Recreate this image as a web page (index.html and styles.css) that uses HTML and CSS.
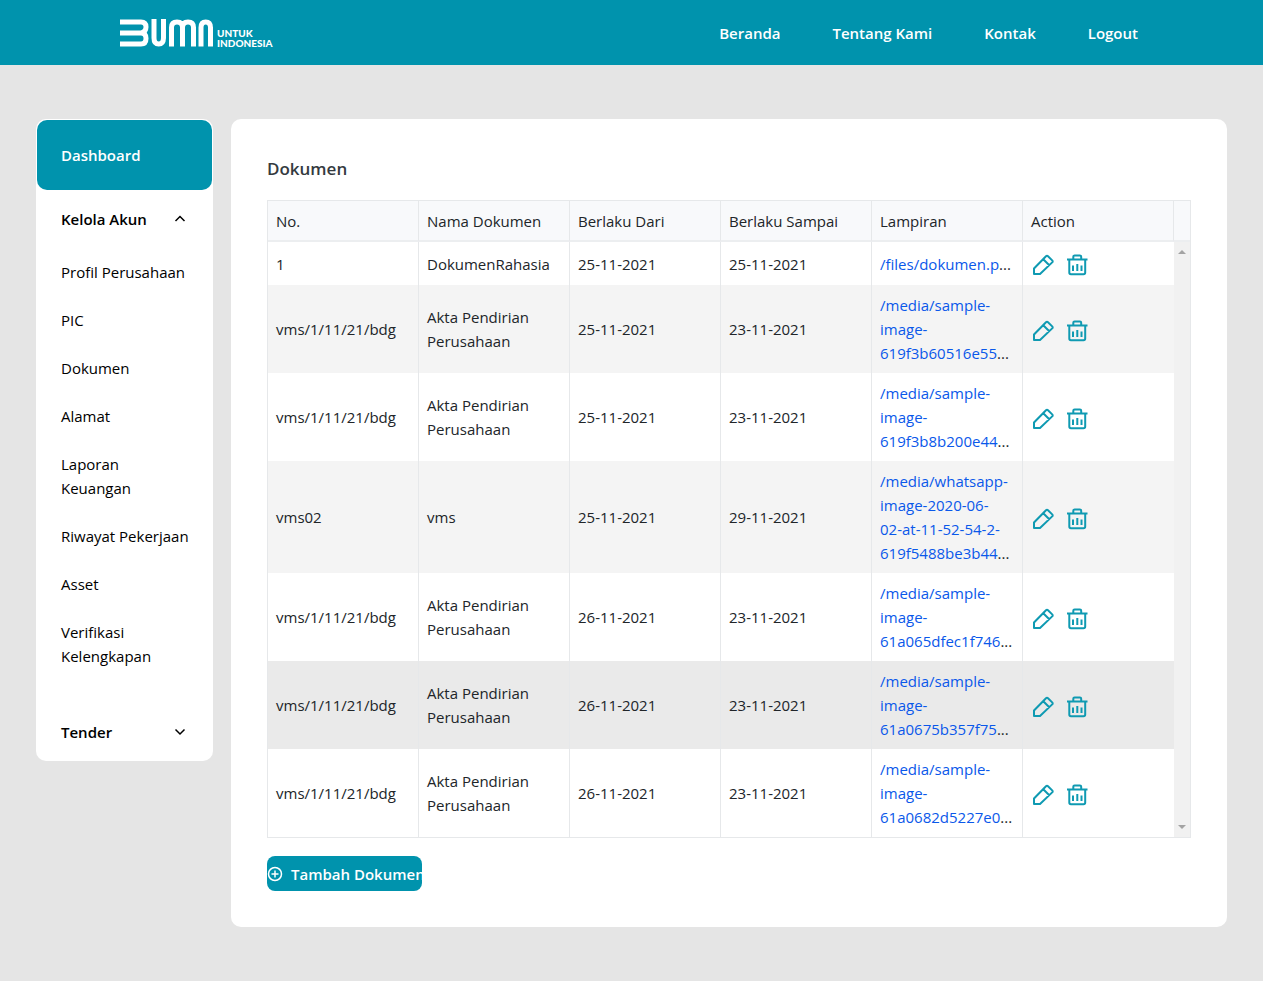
FILE: index.html
```html
<!DOCTYPE html>
<html lang="id">
<head>
<meta charset="utf-8">
<meta name="viewport" content="width=device-width, initial-scale=1">
<title>Dokumen</title>
<link rel="stylesheet" href="styles.css">
</head>
<body>
<svg class="sprite" aria-hidden="true">
  <symbol id="pencil" viewBox="0 0 24 24">
    <path d="M3 21v-5.500L15 3.200q1-1 2 0l4.200 4.200q1 1 0 2L9 21zM12 6l6.300 6.300"/>
  </symbol>
  <symbol id="trash" viewBox="0 0 24 24">
    <path d="M2 6.500h20.500M4.300 6.500V19.500q0 1.700 1.700 1.700h12.500q1.700 0 1.700-1.700V6.500M8.300 6V3.800q0-1.300 1.300-1.300h5.300q1.300 0 1.300 1.300V6M8 12.500v5.500M12.300 11v7M16.500 12.500v5.500"/>
  </symbol>
</svg>
<header class="topbar">
  <a class="brand" href="#" aria-label="BUMN Untuk Indonesia">
    <svg class="brand-mark" viewBox="0 0 93 30" aria-hidden="true">
      <path d="M0 4H21Q26 4 26 9T21 15H0M21 15Q26 15 26 20.500T21 26H0"/>
      <path d="M34 1V20Q34 26 38.700 26T43.500 20V1M51.500 28.500V9.500Q51.500 4 57 4T62.500 9.500V28.500M62.500 9.500Q62.500 4 68 4T73.500 9.500V28.500M81 28.500V9.500Q81 4 85.700 4T90.500 9.500V28.500"/>
    </svg>
    <span class="brand-text">UNTUK<br>INDONESIA</span>
  </a>
  <nav class="topnav">
    <a href="#">Beranda</a><a href="#">Tentang Kami</a><a href="#">Kontak</a><a href="#">Logout</a>
  </nav>
</header>
<div class="page">
  <aside class="sidebar">
    <a class="side-dashboard" href="#">Dashboard</a>
    <button class="side-group" type="button" aria-expanded="true">Kelola Akun
      <svg class="chevron" viewBox="0 0 12 12"><path d="M1.500 8L6 3.500l4.500 4.500"/></svg></button>
    <nav class="side-items">
      <a href="#">Profil Perusahaan</a>
      <a href="#">PIC</a>
      <a href="#">Dokumen</a>
      <a href="#">Alamat</a>
      <a href="#">Laporan<br>Keuangan</a>
      <a href="#">Riwayat Pekerjaan</a>
      <a href="#">Asset</a>
      <a href="#">Verifikasi<br>Kelengkapan</a>
    </nav>
    <button class="side-group" type="button" aria-expanded="false">Tender
      <svg class="chevron" viewBox="0 0 12 12"><path d="M1.500 3.500L6 8l4.500-4.500"/></svg></button>
  </aside>
  <main class="card">
    <h1>Dokumen</h1>
    <div class="grid">
      <div class="table-area">
      <table>
        <thead><tr><th>No.</th><th>Nama Dokumen</th><th>Berlaku Dari</th><th>Berlaku Sampai</th><th>Lampiran</th><th>Action</th></tr></thead>
        <tbody>
          <tr><td>1</td><td>DokumenRahasia</td><td>25-11-2021</td><td>25-11-2021</td><td class="file"><a href="#">/files/dokumen.p</a>...</td><td><div class="actions"><button type="button" aria-label="Edit"><svg><use href="#pencil"/></svg></button><button type="button" aria-label="Hapus"><svg><use href="#trash"/></svg></button></div></td></tr>
          <tr><td>vms/1/11/21/bdg</td><td>Akta Pendirian Perusahaan</td><td>25-11-2021</td><td>23-11-2021</td><td class="file"><a href="#">/media/sample-<br>image-<br>619f3b60516e55</a>...</td><td><div class="actions"><button type="button" aria-label="Edit"><svg><use href="#pencil"/></svg></button><button type="button" aria-label="Hapus"><svg><use href="#trash"/></svg></button></div></td></tr>
          <tr><td>vms/1/11/21/bdg</td><td>Akta Pendirian Perusahaan</td><td>25-11-2021</td><td>23-11-2021</td><td class="file"><a href="#">/media/sample-<br>image-<br>619f3b8b200e44</a>...</td><td><div class="actions"><button type="button" aria-label="Edit"><svg><use href="#pencil"/></svg></button><button type="button" aria-label="Hapus"><svg><use href="#trash"/></svg></button></div></td></tr>
          <tr><td>vms02</td><td>vms</td><td>25-11-2021</td><td>29-11-2021</td><td class="file"><a href="#">/media/whatsapp-<br>image-2020-06-<br>02-at-11-52-54-2-<br>619f5488be3b44</a>...</td><td><div class="actions"><button type="button" aria-label="Edit"><svg><use href="#pencil"/></svg></button><button type="button" aria-label="Hapus"><svg><use href="#trash"/></svg></button></div></td></tr>
          <tr><td>vms/1/11/21/bdg</td><td>Akta Pendirian Perusahaan</td><td>26-11-2021</td><td>23-11-2021</td><td class="file"><a href="#">/media/sample-<br>image-<br>61a065dfec1f746</a>...</td><td><div class="actions"><button type="button" aria-label="Edit"><svg><use href="#pencil"/></svg></button><button type="button" aria-label="Hapus"><svg><use href="#trash"/></svg></button></div></td></tr>
          <tr class="hovered"><td>vms/1/11/21/bdg</td><td>Akta Pendirian Perusahaan</td><td>26-11-2021</td><td>23-11-2021</td><td class="file"><a href="#">/media/sample-<br>image-<br>61a0675b357f75</a>...</td><td><div class="actions"><button type="button" aria-label="Edit"><svg><use href="#pencil"/></svg></button><button type="button" aria-label="Hapus"><svg><use href="#trash"/></svg></button></div></td></tr>
          <tr><td>vms/1/11/21/bdg</td><td>Akta Pendirian Perusahaan</td><td>26-11-2021</td><td>23-11-2021</td><td class="file"><a href="#">/media/sample-<br>image-<br>61a0682d5227e0</a>...</td><td><div class="actions"><button type="button" aria-label="Edit"><svg><use href="#pencil"/></svg></button><button type="button" aria-label="Hapus"><svg><use href="#trash"/></svg></button></div></td></tr>
        </tbody>
      </table>
      </div>
      <div class="gutter" aria-hidden="true">
        <div class="gutter-head"></div>
        <div class="scrollbar">
          <svg class="arrow" viewBox="0 0 8 4"><path d="M0 4L4 0l4 4z"/></svg>
          <svg class="arrow" viewBox="0 0 8 4"><path d="M0 0h8L4 4z"/></svg>
        </div>
      </div>
    </div>
    <button class="add" type="button"><svg viewBox="0 0 16 16"><circle cx="8" cy="8" r="6.500"/><path d="M8 4.500v7M4.500 8h7"/></svg><span>Tambah Dokumen</span></button>
  </main>
</div>
</body>
</html>
```

FILE: styles.css
```css
* { box-sizing: border-box; }

body {
  margin: 0;
  min-height: 100vh;
  background: #e5e5e5;
  color: #212529;
  font: 15px/24px "Open Sans", "Noto Sans", sans-serif;
}

a { color: inherit; text-decoration: none; }
button { font: inherit; color: inherit; border: 0; padding: 0; background: none; cursor: pointer; }
.sprite { display: none; }

.topbar {
  display: flex;
  align-items: center;
  justify-content: space-between;
  height: 65px;
  padding: 0 125px 0 120px;
  background: #0093ad;
  color: #fff;
}
.brand { display: flex; align-items: flex-end; gap: 4px; }
.brand-mark { width: 93px; height: 30px; fill: none; stroke: #fff; stroke-width: 5; }
.brand-text { font: 900 10px/10px Lato, sans-serif; }
.topnav { display: flex; gap: 52px; font-weight: 600; }

.page {
  display: flex;
  align-items: flex-start;
  gap: 18px;
  padding: 54px 36px;
}

.sidebar {
  flex: 0 0 177px;
  padding: 1px;
  background: #fff;
  border-radius: 10px;
  color: #000;
}
.side-dashboard {
  display: block;
  padding: 24px 24px 23px;
  line-height: 23px;
  border-radius: 10px;
  background: #0093ad;
  color: #fff;
  font-weight: 600;
}
.side-group {
  display: flex;
  align-items: center;
  justify-content: space-between;
  width: 100%;
  height: 58px;
  padding: 0 26px 0 24px;
  font-weight: 600;
}
.chevron { width: 12px; height: 12px; fill: none; stroke: #000; stroke-width: 1.5; }
.side-items { padding-bottom: 34px; }
.side-group + .side-items + .side-group { height: 57px; }
.side-items a { display: block; padding: 12px 12px 12px 24px; white-space: nowrap; }
.side-items { padding-bottom: 35px; margin-bottom: -12px; }

.card {
  flex: 1;
  min-width: 0;
  padding: 36px;
  background: #fff;
  border-radius: 10px;
}
h1 { margin: 0 0 18px; font-size: 17px; line-height: 27px; font-weight: 600; color: #343a40; }

.grid { display: flex; border: 1px solid #e6e8ea; }
.table-area { flex: 1; min-width: 0; }
table { width: 100%; table-layout: fixed; border-collapse: separate; border-spacing: 0; }
th, td { padding: 8px; border-right: 1px solid #e6e8ea; text-align: left; vertical-align: middle; }
th { height: 41px; padding: 0 8px; border-bottom: 2px solid #eceef0; background: #f8f9fb; font-weight: 400; white-space: nowrap; }
td:last-child { border-right: 0; }
tbody tr:nth-child(2), tbody tr:nth-child(4) { background: #f4f4f4; }
tbody tr.hovered { background: #eaeaea; }
.file { white-space: nowrap; }
.file a { color: #0a58ea; }
.actions { display: flex; align-items: flex-end; gap: 10px; height: 27px; }
.actions button { width: 24px; height: 24px; }
.actions svg { display: block; width: 24px; height: 24px; fill: none; stroke: #0f9ab2; stroke-width: 2; stroke-linejoin: round; }

.gutter { display: flex; flex-direction: column; width: 16px; }
.gutter-head { height: 41px; border-bottom: 2px solid #eceef0; background: #f8f9fb; }
.scrollbar {
  flex: 1;
  display: flex;
  flex-direction: column;
  align-items: center;
  justify-content: space-between;
  padding: 8px 0;
  background: #f1f1f1;
}
.arrow { width: 8px; height: 4px; fill: #a3a3a3; }

.add {
  display: flex;
  align-items: center;
  gap: 8px;
  width: 155px;
  height: 35px;
  margin-top: 18px;
  overflow: hidden;
  border-radius: 8px;
  background: #0093ad;
  color: #fff;
  font-weight: 600;
  white-space: nowrap;
}
.add svg { flex: none; width: 16px; height: 16px; fill: none; stroke: #fff; stroke-width: 1.5; }
```
